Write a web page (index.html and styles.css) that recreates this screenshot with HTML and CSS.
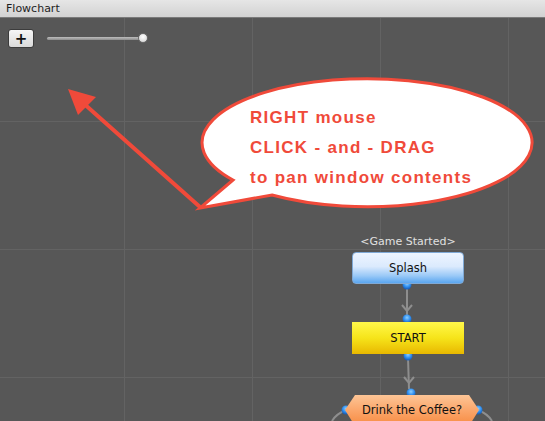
FILE: index.html
```html
<!DOCTYPE html>
<html>
<head>
<meta charset="utf-8">
<link rel="stylesheet" href="styles.css">
</head>
<body>
<div class="window">
  <div class="titlebar">Flowchart</div>
  <div class="canvas">
    <div class="toolbar">
      <button class="add-btn">+</button>
      <div class="slider"><div class="track"></div><div class="thumb"></div></div>
    </div>
    <svg class="overlay" viewBox="0 18 545 403" width="545" height="403">
      <g class="conn">
        <line x1="407" y1="288" x2="407" y2="316"/>
        <polyline points="402,305 407,311 412,305"/>
        <line x1="408" y1="358" x2="409" y2="389"/>
        <polyline points="404,377 409,383 414,377"/>
        <path d="M346 410 Q336 414 332 421"/>
        <path d="M478 410 Q488 414 492 421"/>
      </g>
      <line class="arrow" x1="200" y1="207" x2="82" y2="102"/>
      <polygon class="arrowhead" points="68,89 78,115 96,97"/>
      <path class="balloon" d="M233 180 L200 208 L272 195 A165 64 0 1 0 233 180 Z"/>
    </svg>
    <div class="bubble-text">
      <div>RIGHT mouse</div>
      <div>CLICK - and - DRAG</div>
      <div>to pan window contents</div>
    </div>
    <div class="event-label">&lt;Game Started&gt;</div>
    <svg class="dots" viewBox="0 18 545 403" width="545" height="403">
      <defs>
        <radialGradient id="dot2" cx="50%" cy="35%" r="60%">
          <stop offset="0%" stop-color="#8fd0ff"/>
          <stop offset="60%" stop-color="#2f8ff0"/>
          <stop offset="100%" stop-color="#1b5fb8"/>
        </radialGradient>
      </defs>
      <circle cx="407" cy="285" r="4.5" fill="url(#dot2)"/>
      <circle cx="407" cy="319" r="4.5" fill="url(#dot2)"/>
      <circle cx="408" cy="356" r="4.5" fill="url(#dot2)"/>
      <circle cx="411" cy="393" r="4.5" fill="url(#dot2)"/>
      <circle cx="346" cy="410" r="4.5" fill="url(#dot2)"/>
      <circle cx="478" cy="410" r="4.5" fill="url(#dot2)"/>
    </svg>
    <div class="node splash">Splash</div>
    <div class="node start">START</div>
    <div class="node question">Drink the Coffee?</div>
  </div>
</div>
</body>
</html>
```
FILE: styles.css
```css
html, body {
  margin: 0;
  padding: 0;
  width: 545px;
  height: 421px;
  overflow: hidden;
  background: #575757;
}
.window {
  display: flex;
  flex-direction: column;
  width: 545px;
  height: 421px;
}
.titlebar {
  height: 17px;
  flex: none;
  background: linear-gradient(#e6e6e6, #d2d2d2);
  border-bottom: 1px solid #7a7a7a;
  font-family: "DejaVu Sans", sans-serif;
  font-size: 11px;
  line-height: 17px;
  color: #1e1e1e;
  padding-left: 6px;
}
.canvas {
  position: relative;
  flex: 1;
  overflow: hidden;
  background-color: #575757;
  background-image:
    linear-gradient(to right, #636363 0, #636363 1px, transparent 1px),
    linear-gradient(to bottom, #636363 0, #636363 1px, transparent 1px);
  background-size: 128px 128px;
  background-position: 124px 103px;
}
.toolbar {
  display: flex;
  align-items: center;
  gap: 13px;
  padding: 11px 0 0 8px;
}
.add-btn {
  width: 26px;
  height: 19px;
  margin: 0;
  padding: 0;
  border: 1px solid #3c3c3c;
  border-radius: 3px;
  background: linear-gradient(#f6f6f6, #dadada);
  font-family: "DejaVu Sans", sans-serif;
  font-weight: bold;
  font-size: 15px;
  line-height: 16px;
  color: #111;
}
.slider {
  position: relative;
  width: 100px;
  height: 10px;
}
.track {
  position: absolute;
  left: 0;
  top: 3px;
  width: 96px;
  height: 3px;
  border-radius: 2px;
  background: linear-gradient(#bdbdbd, #8c8c8c);
}
.thumb {
  position: absolute;
  left: 91px;
  top: -1px;
  width: 10px;
  height: 10px;
  border-radius: 50%;
  background: radial-gradient(circle at 50% 35%, #ffffff, #cfcfcf);
  border: 1px solid #6a6a6a;
  box-sizing: border-box;
}
.overlay, .dots {
  position: absolute;
  left: 0;
  top: 0;
}
.conn line, .conn polyline, .conn path {
  stroke: #8e8e8e;
  stroke-width: 2;
  fill: none;
}
.arrow {
  stroke: #f04a3a;
  stroke-width: 4;
}
.arrowhead {
  fill: #f04a3a;
}
.balloon {
  fill: #ffffff;
  stroke: #f04a3a;
  stroke-width: 3;
}
.bubble-text {
  position: absolute;
  left: 250px;
  top: 85px;
  font-family: "Liberation Sans", Arial, sans-serif;
  font-weight: bold;
  font-size: 17px;
  letter-spacing: 1.3px;
  line-height: 30px;
  color: #f04a3a;
  white-space: nowrap;
}
.event-label {
  position: absolute;
  left: 352px;
  width: 112px;
  top: 217px;
  text-align: center;
  font-family: "DejaVu Sans", sans-serif;
  font-size: 11px;
  color: #e0e0e0;
  white-space: nowrap;
}
.node {
  position: absolute;
  display: flex;
  align-items: center;
  justify-content: center;
  font-family: "DejaVu Sans", sans-serif;
  font-size: 11.5px;
  color: #111;
  box-sizing: border-box;
}
.splash {
  left: 352px;
  top: 234px;
  width: 112px;
  height: 32px;
  border-radius: 4px;
  background: linear-gradient(#eef5ff 0%, #dbeafd 45%, #9ccaf7 75%, #5aa6f0 100%);
  border: 1px solid #7fa9d6;
}
.start {
  left: 352px;
  top: 304px;
  width: 112px;
  height: 32px;
  background: linear-gradient(#fff84a 0%, #f6e41a 50%, #e8b800 100%);
}
.question {
  left: 345px;
  top: 377px;
  width: 134px;
  height: 31px;
  background: linear-gradient(#fdc596 0%, #fba66a 50%, #f78a40 100%);
  clip-path: polygon(10px 0, 124px 0, 134px 15px, 124px 31px, 10px 31px, 0 15px);
  align-items: flex-start;
  padding-top: 8px;
}
```
